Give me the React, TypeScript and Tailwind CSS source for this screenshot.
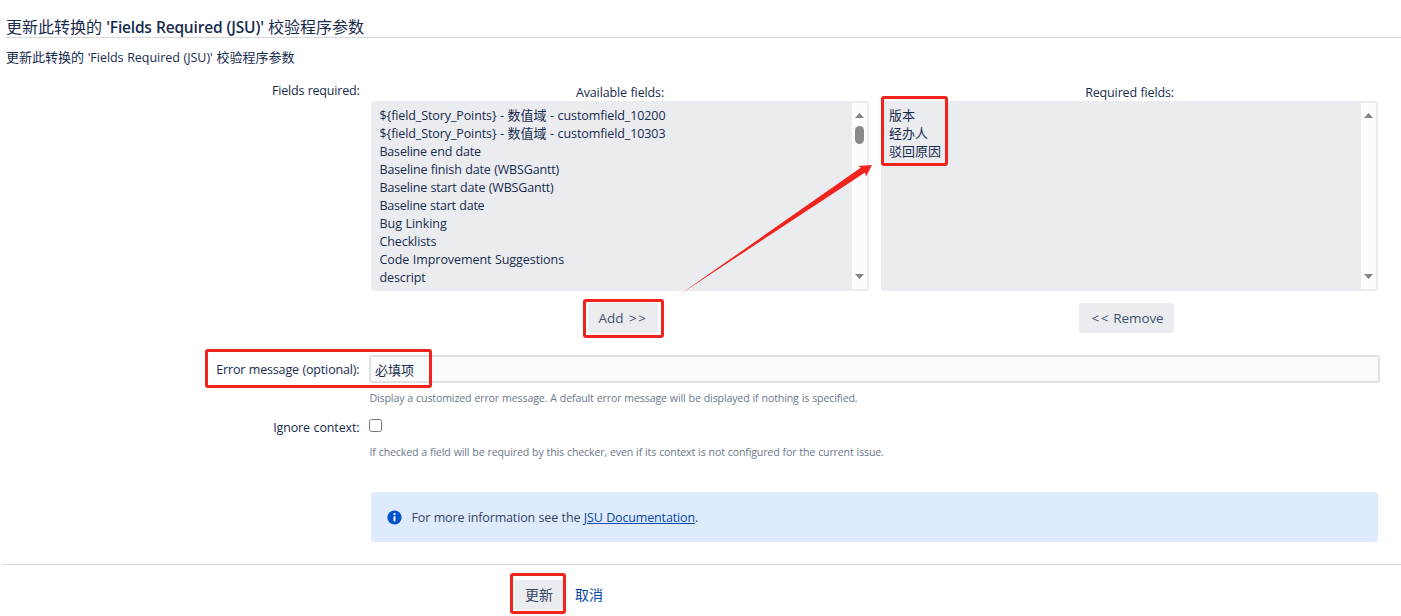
import React from "react";

type Field = { label: React.ReactNode; spacing?: string };

const Han = ({ children }: { children: string }) => (
  <span className="text-[13px] leading-none tracking-normal">{children}</span>
);

const available: Field[] = [
  { label: <>{"${field_Story_Points} - "}<Han>数值域</Han>{" - customfield_10200"}</>, spacing: "tracking-[-0.1px]" },
  { label: <>{"${field_Story_Points} - "}<Han>数值域</Han>{" - customfield_10303"}</>, spacing: "tracking-[-0.1px]" },
  { label: "Baseline end date", spacing: "tracking-[-0.2px]" },
  { label: "Baseline finish date (WBSGantt)", spacing: "tracking-[-0.15px]" },
  { label: "Baseline start date (WBSGantt)", spacing: "tracking-[-0.18px]" },
  { label: "Baseline start date", spacing: "tracking-[-0.23px]" },
  { label: "Bug Linking", spacing: "tracking-[-0.05px]" },
  { label: "Checklists", spacing: "tracking-[-0.1px]" },
  { label: "Code Improvement Suggestions", spacing: "tracking-[-0.07px]" },
  { label: "descript", spacing: "tracking-[-0.1px]" },
];
const required: Field[] = [
  { label: <Han>版本</Han> },
  { label: <Han>经办人</Han> },
  { label: <Han>驳回原因</Han> },
];

function FieldList({ items, thumb }: { items: Field[]; thumb?: boolean }) {
  return (
    <div className="flex h-[190px] justify-between rounded-[3px] bg-[#ebecf0] p-0.5">
      <ul className={`pt-1 leading-[18px] ${thumb ? "pl-[6.5px]" : "pl-[6px]"}`}>
        {items.map((item, i) => (
          <li key={i} className={`h-[18px] whitespace-pre ${item.spacing ?? ""}`}>{item.label}</li>
        ))}
      </ul>
      <div className="flex w-[15px] flex-col items-center justify-between bg-[#fcfcfc] pt-[10px] pb-[10px]">
        <div className="flex flex-col items-center gap-2">
          <svg width="9" height="5" viewBox="0 0 9 5"><path d="M4.5 0 9 5H0Z" fill="#858585" /></svg>
          {thumb && <div className="h-[18px] w-[9px] rounded-full bg-[#8a8a8a]" />}
        </div>
        <svg width="9" height="5" viewBox="0 0 9 5"><path d="M0 0H9L4.5 5Z" fill="#858585" /></svg>
      </div>
    </div>
  );
}

function Mark({ className }: { className: string }) {
  return <div className={`pointer-events-none absolute rounded-[3px] border-[3px] border-[#f0241c] ${className}`} />;
}

export default function App() {
  return (
    <div className="relative h-[616px] w-[1401px] overflow-hidden bg-white font-['Open_Sans','Noto_Sans_CJK_SC',sans-serif] text-[12.5px] leading-[18px] [word-spacing:0.4px] text-[#172b4d]">
      <header className="pt-[17px] pl-1.5">
        <h1 className="h-[21px] border-b border-[#d7d8da] text-[16px] leading-[20px] whitespace-pre">
          更新此转换的<span className="text-[15.5px] font-semibold tracking-[-0.19px]"> 'Fields Required (JSU)' </span>校验程序参数
        </h1>
        <p className="mt-[11px] h-[18px] whitespace-pre"><Han>更新此转换的</Han><span className="tracking-[-0.03px]"> 'Fields Required (JSU)' </span><Han>校验程序参数</Han></p>
      </header>

      <main>
        <section className="mt-[14px] flex">
          <div className="w-[359.5px] pt-px text-right tracking-[-0.2px]">Fields required:</div>
          <div className="ml-[11.5px] flex gap-[12px] pt-[3px]">
            <div className="w-[498px]">
              <div className="h-[17px] text-center tracking-[-0.12px]">Available fields:</div>
              <FieldList items={available} thumb />
              <div className="mt-3 flex justify-center pl-1.5">
                <button className="h-[30px] w-[70px] rounded-[3px] bg-[#ebecf0] text-[13.5px] text-[#42526e]">Add <span className="ml-0.5 tracking-[1.5px]">&gt;&gt;</span></button>
              </div>
            </div>
            <div className="w-[497px]">
              <div className="h-[17px] text-center tracking-[-0.15px]">Required fields:</div>
              <FieldList items={required} />
              <div className="mt-3 flex justify-center pr-1.5">
                <button className="h-[30px] w-[95px] rounded-[3px] bg-[#ebecf0] pl-0.5 text-[13.5px] tracking-[-0.1px] text-[#42526e]"><span className="tracking-[1.5px]">&lt;&lt;</span> Remove</button>
              </div>
            </div>
          </div>
        </section>

        <section className="mt-[22px] flex">
          <label htmlFor="message" className="w-[359.5px] pt-[6px] text-right tracking-[-0.15px]">Error message (optional):</label>
          <div className="ml-[9.5px]">
            <input id="message" defaultValue="必填项" className="block h-7 w-[1011px] rounded-[3px] border-2 border-[#dfe1e6] bg-[#fafbfc] px-1 text-[13px]" />
            <p className="mt-[7px] h-4 pl-[0.5px] text-[10.6px] leading-4 tracking-[-0.135px] text-[#6b778c]">Display a customized error message. A default error message will be displayed if nothing is specified.</p>
          </div>
        </section>

        <section className="mt-3 flex">
          <label htmlFor="context" className="w-[359.5px] pt-px text-right tracking-[-0.12px]">Ignore context:</label>
          <div className="ml-[9.5px]">
            <input id="context" type="checkbox" className="mt-px block h-[13px] w-[13px] appearance-none rounded-[2.5px] border border-[#767676] bg-white" />
            <p className="mt-3 h-4 pl-[0.5px] text-[10.6px] leading-4 tracking-[-0.145px] text-[#6b778c]">If checked a field will be required by this checker, even if its context is not configured for the current issue.</p>
          </div>
        </section>

        <aside className="mt-8 ml-[371px] flex h-[50px] w-[1007px] items-center gap-[9px] rounded-[3px] bg-[#deebff] pl-4 text-[#344563]">
          <svg width="15" height="15" viewBox="0 0 15 15">
            <circle cx="7.5" cy="7.5" r="7.1" fill="#0052cc" />
            <circle cx="7.5" cy="4.2" r="1.1" fill="#fff" />
            <rect x="6.5" y="6.2" width="2" height="5.3" rx=".7" fill="#fff" />
          </svg>
          <p className="pt-[2px] pl-[0.5px] tracking-[-0.15px]">For more information see the <a className="text-[#0747a6] underline">JSU Documentation</a>.</p>
        </aside>
      </main>

      <footer className="mt-[22px] ml-0.5 flex h-[52px] items-start border-t border-[#d7d8da] pt-[15px] pl-[512px] text-sm">
        <button className="h-[30px] w-[50px] rounded-[3px] bg-[#ebecf0] text-[#344563]">更新</button>
        <a className="ml-[11px] leading-[30px] text-[#0747a6]">取消</a>
      </footer>

      <Mark className="top-[96px] left-[881px] h-[70px] w-[67px]" />
      <Mark className="top-[299px] left-[583px] h-[39px] w-[81px]" />
      <Mark className="top-[349px] left-[205px] h-[39px] w-[227px]" />
      <Mark className="top-[573px] left-[510px] h-[41px] w-[56px]" />
      <svg className="pointer-events-none absolute top-[160px] left-[675px]" width="205" height="140" viewBox="675 160 205 140">
        <path d="M679 295 861 167.5 858 166 872 165 866 176.5 865 172.5Z" fill="#f0241c" />
      </svg>
    </div>
  );
}
